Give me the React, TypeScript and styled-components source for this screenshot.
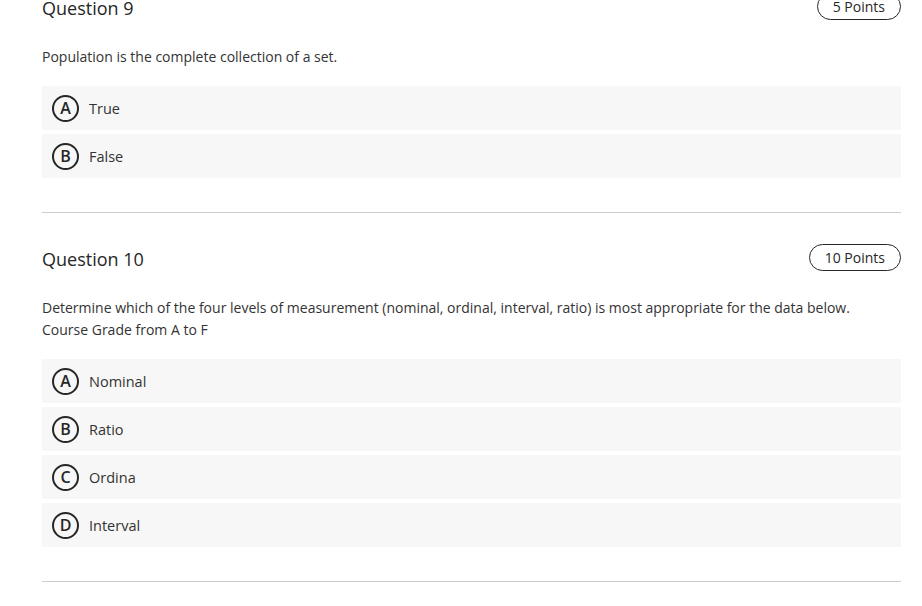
import React from "react";
import styled, { createGlobalStyle } from "styled-components";

type Question = {
  title: string;
  points: string;
  prompt: string[];
  options: string[];
};

const questions: Question[] = [
  {
    title: "Question 9",
    points: "5 Points",
    prompt: ["Population is the complete collection of a set."],
    options: ["True", "False"],
  },
  {
    title: "Question 10",
    points: "10 Points",
    prompt: [
      "Determine which of the four levels of measurement (nominal, ordinal, interval, ratio) is most appropriate for the data below.",
      "Course Grade from A to F",
    ],
    options: ["Nominal", "Ratio", "Ordina", "Interval"],
  },
];

const letters = ["A", "B", "C", "D", "E", "F"];

const App: React.FC = () => {
  return (
    <>
      <GlobalStyle />
      <Page>
        {questions.map((q) => (
          <Section key={q.title}>
            <Header>
              <Title>{q.title}</Title>
              <Pill>{q.points}</Pill>
            </Header>
            <Prompt>
              {q.prompt.map((line, i) => (
                <div key={i}>{line}</div>
              ))}
            </Prompt>
            <Options>
              {q.options.map((opt, i) => (
                <Option key={opt}>
                  <Letter>{letters[i]}</Letter>
                  <Label>{opt}</Label>
                </Option>
              ))}
            </Options>
          </Section>
        ))}
      </Page>
    </>
  );
};

export default App;

const GlobalStyle = createGlobalStyle`
  html, body {
    margin: 0;
    padding: 0;
    background: #fff;
    overflow: hidden;
  }
  body {
    font-family: "Open Sans", "Noto Sans", sans-serif;
    color: #262626;
  }
`;

const Page = styled.div`
  padding: 0 21px 0 42px;
  margin-top: -7px;
`;

const Section = styled.section`
  padding: 31px 0 34px;
  border-bottom: 1px solid #cdcdcd;
  &:first-child {
    padding-top: 0;
  }
`;

const Header = styled.div`
  display: flex;
  align-items: center;
  justify-content: space-between;
  height: 27px;
`;

const Title = styled.h2`
  margin: 0;
  padding-top: 3px;
  font-size: 18px;
  font-weight: 400;
  color: #262626;
  line-height: 27px;
`;

const Pill = styled.span`
  display: inline-flex;
  align-items: center;
  height: 27px;
  box-sizing: border-box;
  padding: 0 15px;
  border: 1px solid #262626;
  border-radius: 999px;
  font-size: 14px;
  color: #262626;
`;

const Prompt = styled.div`
  margin-top: 26px;
  font-size: 14px;
  line-height: 22px;
  color: #333;
`;

const Options = styled.div`
  margin-top: 18px;
  display: flex;
  flex-direction: column;
  gap: 4px;
`;

const Option = styled.div`
  display: flex;
  align-items: center;
  height: 44px;
  padding-left: 10px;
  gap: 10px;
  background: #f7f7f7;
`;

const Letter = styled.span`
  display: inline-flex;
  align-items: center;
  justify-content: center;
  width: 27px;
  height: 27px;
  box-sizing: border-box;
  border: 2px solid #262626;
  border-radius: 50%;
  font-size: 16px;
  font-weight: 600;
  color: #262626;
`;

const Label = styled.span`
  font-size: 14.5px;
  color: #333;
`;
